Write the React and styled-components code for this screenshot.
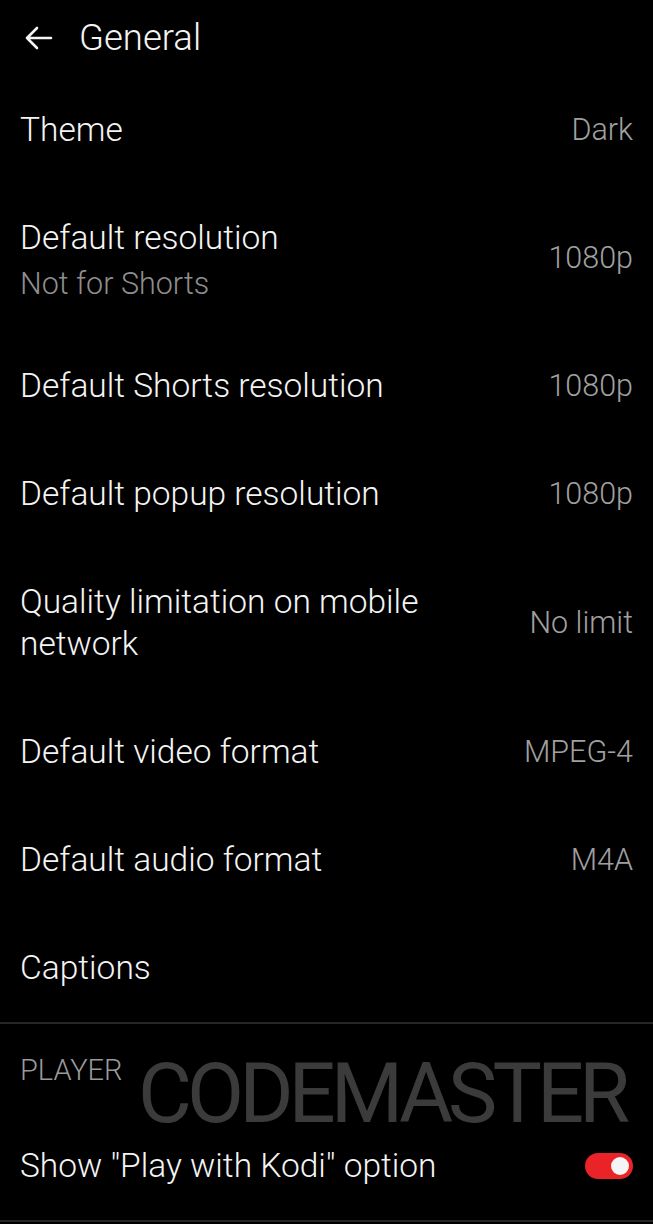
import styled, { createGlobalStyle } from "styled-components";

const GlobalStyle = createGlobalStyle`
    html, body {
        margin: 0;
        padding: 0;
        background: #000000;
    }
    body {
        font-family: Roboto, "Liberation Sans", sans-serif;
        font-weight: 300;
        color: #f4f4f4;
    }
`;

const settings = [
    { title: ["Theme"], value: "Dark" },
    { title: ["Default resolution"], sub: "Not for Shorts", value: "1080p" },
    { title: ["Default Shorts resolution"], value: "1080p" },
    { title: ["Default popup resolution"], value: "1080p" },
    { title: ["Quality limitation on mobile", "network"], value: "No limit" },
    { title: ["Default video format"], value: "MPEG-4" },
    { title: ["Default audio format"], value: "M4A" },
    { title: ["Captions"] },
];

function App() {
    return (
        <>
            <GlobalStyle />
            <Page>
                <Header>
                    <BackIcon width="30" height="26" viewBox="0 0 30 26">
                        <path d="M27 13H3M13 3L3 13l10 10" />
                    </BackIcon>
                    <HeaderTitle>General</HeaderTitle>
                </Header>

                <Section>
                    {settings.map((item) => (
                        <Row key={item.title[0]}>
                            <Texts>
                                {item.title.map((line) => (
                                    <Title key={line}>{line}</Title>
                                ))}
                                {item.sub && <Sub>{item.sub}</Sub>}
                            </Texts>
                            {item.value && <Value>{item.value}</Value>}
                        </Row>
                    ))}
                </Section>

                <Section>
                    <SectionHead>
                        <SectionLabel>PLAYER</SectionLabel>
                        <Watermark>CODEMASTER</Watermark>
                    </SectionHead>
                    <Row>
                        <Texts>
                            <Title>Show "Play with Kodi" option</Title>
                        </Texts>
                        <Toggle $on />
                    </Row>
                </Section>
            </Page>
        </>
    );
}

const Page = styled.div`
    width: 653px;
    min-height: 1224px;
    background: #000000;
    overflow: hidden;
`;

const Header = styled.div`
    height: 76px;
    display: flex;
    align-items: center;
    padding: 0 0 0 24px;
    gap: 25px;
    box-sizing: border-box;
`;

const BackIcon = styled.svg`
    fill: none;
    stroke: #f4f4f4;
    stroke-width: 2.6;
    stroke-linecap: round;
    stroke-linejoin: round;
    margin-bottom: 1px;
`;

const HeaderTitle = styled.div`
    font-size: 36.5px;
    line-height: 42px;
    color: #f4f4f4;
`;

const Section = styled.div`
    border-bottom: 2px solid #262626;
`;

const Row = styled.div`
    display: flex;
    align-items: center;
    justify-content: space-between;
    padding: 33px 20px 33px 20px;
    gap: 20px;
`;

const Texts = styled.div`
    display: flex;
    flex-direction: column;
`;

const Title = styled.div`
    font-size: 33.5px;
    line-height: 42px;
    color: #f4f4f4;
`;

const Sub = styled.div`
    font-size: 30.5px;
    line-height: 40px;
    margin-top: 5px;
    margin-bottom: -5px;
    color: #8e8e8e;
`;

const Value = styled.div`
    font-size: 30.5px;
    line-height: 40px;
    color: #a0a0a0;
    white-space: nowrap;
`;

const SectionHead = styled.div`
    position: relative;
    padding: 30px 20px 0 20px;
    height: 58px;
`;

const SectionLabel = styled.div`
    font-size: 29px;
    line-height: 32px;
    color: #9a9a9a;
`;

const Watermark = styled.div`
    position: absolute;
    left: 138px;
    top: 20px;
    font-size: 83px;
    font-weight: 400;
    line-height: 100px;
    letter-spacing: -5px;
    color: #3b3b3b;
    pointer-events: none;
`;

const Toggle = styled.div`
    position: relative;
    width: 48px;
    height: 26px;
    border-radius: 13px;
    background: ${(p) => (p.$on ? "#ea2328" : "#555555")};
    flex-shrink: 0;

    &::after {
        content: "";
        position: absolute;
        top: 4px;
        left: ${(p) => (p.$on ? "26px" : "4px")};
        width: 18px;
        height: 18px;
        border-radius: 50%;
        background: #f5f5f5;
    }
`;

export default App;
